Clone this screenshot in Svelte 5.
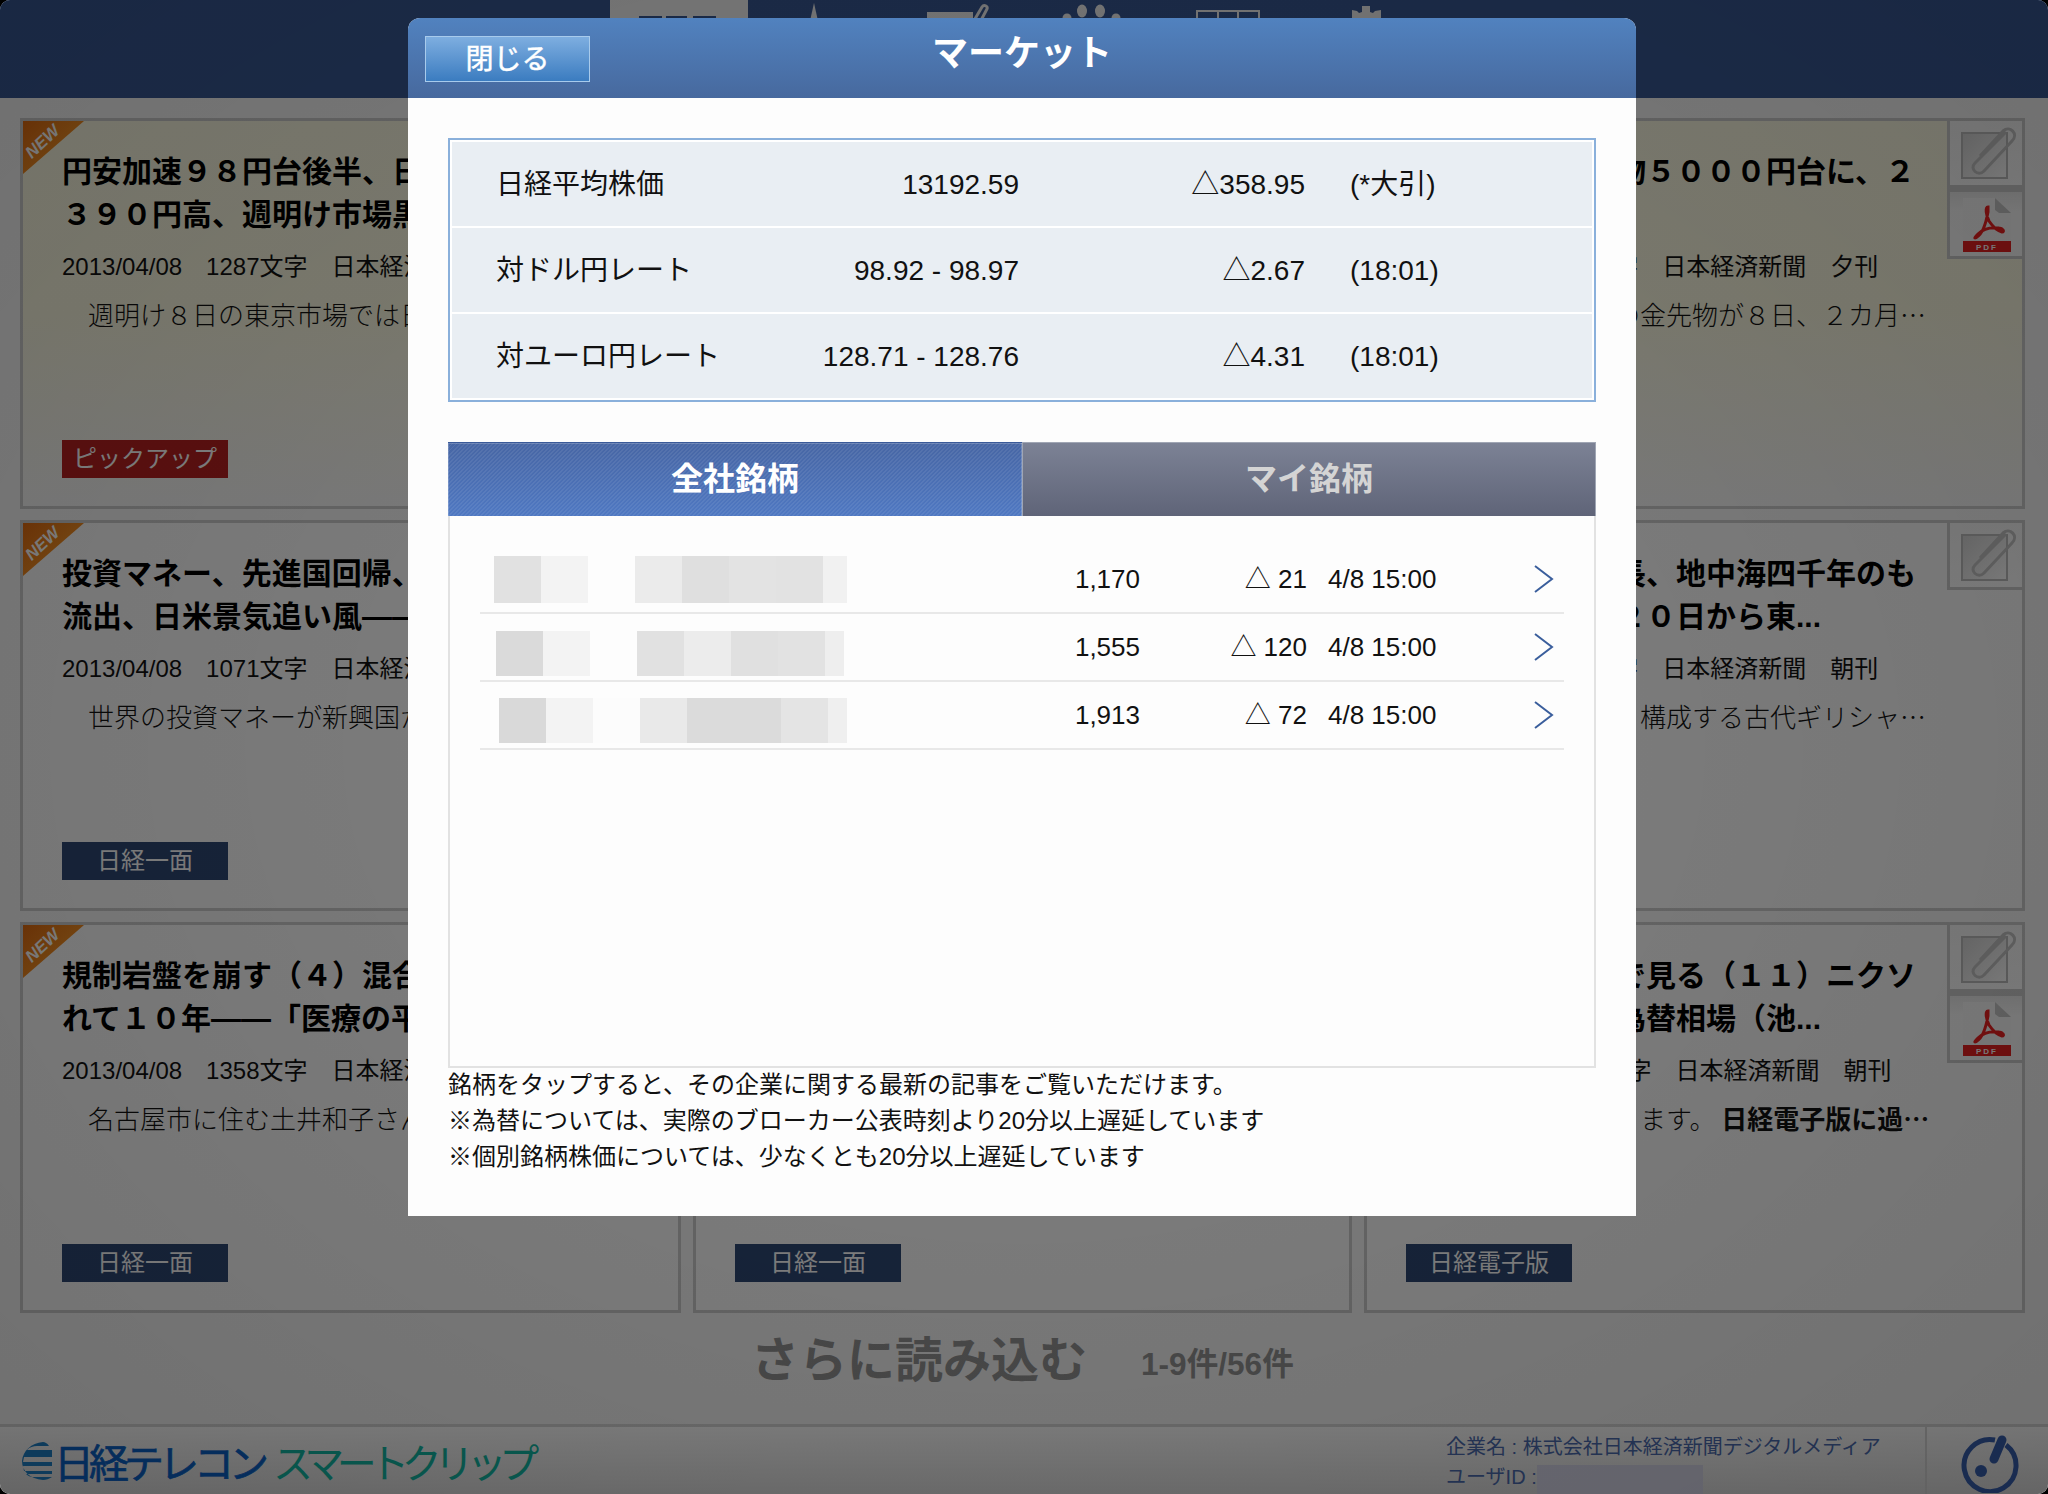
<script>
  const cards = [
    { warm: true, news: true, title: ['円安加速９８円台後半、日', '３９０円高、週明け市場黒'], meta: '2013/04/08　1287文字　日本経済', body: '　週明け８日の東京市場では日', tag: 'ピックアップ', red: true },
    { warm: true, title: ['　', '　'], meta: '　', body: '　' },
    { warm: true, clip: true, pdf: true, title: ['　　　　　　　物５０００円台に、２', '　'], meta: '2013/04/08　101文字　日本経済新聞　夕刊', body: '　　　　　　　　の金先物が８日、２カ月…' },
    { news: true, title: ['投資マネー、先進国回帰、新', '流出、日米景気追い風——'], meta: '2013/04/08　1071文字　日本経済', body: '　世界の投資マネーが新興国か', tag: '日経一面' },
    { title: ['　', '　'], meta: '　', body: '　' },
    { clip: true, title: ['　　　　　　　長、地中海四千年のも', '　　　　　　　２０日から東...'], meta: '2013/04/08　101文字　日本経済新聞　朝刊', body: '　　　　　　　　　構成する古代ギリシャ…' },
    { news: true, title: ['規制岩盤を崩す（４）混合', 'れて１０年——「医療の平'], meta: '2013/04/08　1358文字　日本経済', body: '　名古屋市に住む土井和子さん', tag: '日経一面' },
    { title: ['　', '　'], meta: '　', body: '　', tag: '日経一面' },
    { clip: true, pdf: true, title: ['　　　　　　　で見る（１１）ニクソ', '　　　　　　　為替相場（池...'], meta: '2013/04/08　1358文字　日本経済新聞　朝刊', body: '　　　　　　　　　ます。', bold: '日経電子版に過…', tag: '日経電子版' }
  ];

  const market = [
    ['日経平均株価', '13192.59', '△358.95', '(*大引)'],
    ['対ドル円レート', '98.92 - 98.97', '△2.67', '(18:01)'],
    ['対ユーロ円レート', '128.71 - 128.76', '△4.31', '(18:01)']
  ];

  // blurred company names: [width, grey]
  const stocks = [
    { left: 14, top: 0, h: 47, price: '1,170', diff: '△ 21', blocks: [[47, '#e1e1e1'], [47, '#f3f3f3'], [47, 'transparent'], [47, '#ebebeb'], [47, '#dfdfdf'], [47, '#e3e3e3'], [47, '#e2e2e2'], [24, '#f1f1f1']] },
    { left: 16, top: 12, h: 45, price: '1,555', diff: '△ 120', blocks: [[47, '#dadada'], [47, '#f3f3f3'], [47, '#fdfdfd'], [47, '#e1e1e1'], [47, '#ececec'], [47, '#e0e0e0'], [47, '#e2e2e2'], [19, '#eeeeee']] },
    { left: 19, top: 10, h: 45, price: '1,913', diff: '△ 72', blocks: [[47, '#d9d9d9'], [47, '#f3f3f3'], [47, '#fcfcfc'], [47, '#e9e9e9'], [94, '#dbdbdb'], [47, '#e4e4e4'], [19, '#efefef']] }
  ];
</script>

<div class="page">
  <header class="top">
    <nav class="nav">
      <div class="item on">
        <svg width="138" height="98"><path d="M29 16h23v40H29zM56 16h21v40H56zM83 16h23v40H83z" fill="#385894" /></svg>
      </div>
      <div class="item">
        <svg width="138" height="98"><path d="M66 3 72 30H60Z" fill="#f2f2f2" /></svg>
      </div>
      <div class="item">
        <svg width="138" height="98"><path d="M41 12h46v30H41z" fill="#f2f2f2" /><path d="M86 24 96 7c2-3 6-1 5 2L92 26" fill="none" stroke="#f2f2f2" stroke-width="3" /></svg>
      </div>
      <div class="item">
        <svg width="138" height="98" fill="#f2f2f2"><ellipse cx="58" cy="11" rx="5" ry="6.5" /><ellipse cx="76" cy="11" rx="5" ry="6.5" /><circle cx="43" cy="18" r="4.5" /><circle cx="92" cy="18" r="4.5" /></svg>
      </div>
      <div class="item">
        <svg width="138" height="98"><path d="M35 30V11h62v19M56 11v19M76 11v19" fill="none" stroke="#f2f2f2" stroke-width="2" /></svg>
      </div>
      <div class="item">
        <svg width="138" height="98"><path d="M52 30V10l5 1 2 2 3-1V6h8v6l3 1 2-2 6-1v20Z" fill="#f2f2f2" /></svg>
      </div>
    </nav>
  </header>

  <main class="content">
    <div class="grid">
      {#each cards as c}
        <article class="card" class:warm={c.warm}>
          {#if c.news}
            <div class="ribbon"><span>NEW</span></div>
          {/if}
          {#if c.clip}
            <div class="side">
              <div class="sbtn">
                <svg width="72" height="64" viewBox="0 0 72 64">
                  <defs><linearGradient id="sq" x1="0" y1="0" x2="1" y2="1"><stop offset="0" stop-color="#d4d4d4" /><stop offset="1" stop-color="#ffffff" /></linearGradient></defs>
                  <rect x="12" y="12" width="45" height="45" fill="url(#sq)" stroke="#bdbdbd" stroke-width="2" />
                  <path d="M56 11 25 42c-6 6 3 14 9 8L62 20c7-7-2-16-9-10L30 35" fill="none" stroke="#c4c4c4" stroke-width="3" />
                </svg>
              </div>
              {#if c.pdf}
                <div class="sbtn pdf">
                  <svg width="72" height="66" viewBox="0 0 72 66">
                    <path d="M13 6h32l16 15v39H13Z" fill="#fafafa" />
                    <path d="M45 6v12l4 3h12Z" fill="#c8c8c8" />
                    <path d="M38 15c-3 0-2 8 1 14 4 6 9 10 13 11 3 0 1-4-3-4-8-1-16 1-21 6-4 4-4 5-1 3 5-3 9-14 11-25 0-3 0-5 0-5Z" fill="none" stroke="#ee2020" stroke-width="3" />
                    <rect x="13" y="49" width="48" height="11" fill="#e82020" />
                    <text x="37" y="58" text-anchor="middle" class="pdft">PDF</text>
                  </svg>
                </div>
              {/if}
            </div>
          {/if}
          <h2>{c.title[0]}<br />{c.title[1]}</h2>
          <p class="meta">{c.meta}</p>
          <p class="body">{c.body}{#if c.bold}&nbsp;<b>{c.bold}</b>{/if}</p>
          {#if c.tag}
            <div class="tag" class:red={c.red}>{c.tag}</div>
          {/if}
        </article>
      {/each}
    </div>
    <div class="more">
      <span class="load">さらに読み込む</span>
      <span class="count">1-9件/56件</span>
    </div>
  </main>

  <footer class="bottom">
    <div class="logo">
      <svg class="globe" width="32" height="40" viewBox="0 0 32 40">
        <path d="M22 1C10 2 2 10 1 20c0 10 8 18 21 19 3 0 6-1 9-3H12c-3 0-5-1-7-3h26v-3H3l-1-5h29v-4H2l1-5h28V9H6c3-3 6-4 10-4h12c-2-3-4-4-6-4Z" fill="#1e82c8" />
      </svg>
      <span class="nikkei">日経テレコン</span>
      <span class="clipname">スマートクリップ</span>
    </div>
    <div class="user">
      <div>企業名 : 株式会社日本経済新聞デジタルメディア</div>
      <div class="uid">ユーザID : <i></i></div>
    </div>
    <div class="help">
      <svg width="60" height="60" viewBox="0 0 60 60">
        <path d="M36 7A26 26 0 1 0 47 12" fill="none" stroke="#3860b0" stroke-width="5" />
        <path d="M43 7 35 26" stroke="#3860b0" stroke-width="9" stroke-linecap="round" />
        <circle cx="22" cy="38" r="6" fill="#3860b0" />
      </svg>
    </div>
  </footer>

  <div class="dim"></div>

  <section class="modal">
    <div class="modal-head">
      <button class="close">閉じる</button>
      <h1>マーケット</h1>
    </div>
    <div class="modal-body">
      <div class="rates">
        {#each market as m}
          <div class="rate">
            <span>{m[0]}</span>
            <span class="r">{m[1]}</span>
            <span class="r">{m[2]}</span>
            <span class="note">{m[3]}</span>
          </div>
        {/each}
      </div>

      <div class="tabs">
        <div class="tab active">全社銘柄</div>
        <div class="tab">マイ銘柄</div>
      </div>
      <div class="panel">
        {#each stocks as s}
          <div class="stock">
            <div class="name" style="margin-left:{s.left}px;margin-top:{s.top}px">
              {#each s.blocks as b}
                <i style="width:{b[0]}px;height:{s.h}px;background:{b[1]}"></i>
              {/each}
            </div>
            <span class="r">{s.price}</span>
            <span class="r">{s.diff}</span>
            <span class="time">4/8 15:00</span>
            <svg width="20" height="28" viewBox="0 0 20 28"><path d="M1 1 18 14 1 27" fill="none" stroke="#3a5e9c" stroke-width="2" /></svg>
          </div>
        {/each}
      </div>

      <div class="notes">
        <div>銘柄をタップすると、その企業に関する最新の記事をご覧いただけます。</div>
        <div>※為替については、実際のブローカー公表時刻より20分以上遅延しています</div>
        <div>※個別銘柄株価については、少なくとも20分以上遅延しています</div>
      </div>
    </div>
  </section>
</div>

<style>
:global(body) {
  margin: 0;
  background: #000;
}

.page {
  position: relative;
  width: 2048px;
  height: 1494px;
  overflow: hidden;
  border-radius: 10px;
  display: flex;
  flex-direction: column;
  background: #f8f8f8;
  font-family: "Liberation Sans", "Noto Sans CJK JP", sans-serif;
  color: #111;
}

.top {
  height: 98px;
  flex: none;
  background: #385894;
  padding-left: 610px;
}
.nav {
  display: flex;
}
.item {
  width: 138px;
  height: 98px;
}
.item.on {
  background: #f6f6f6;
}

.content {
  flex: 1;
  padding: 20px 23px 0 20px;
}
.grid {
  display: grid;
  grid-template-columns: 661px 659px 661px;
  grid-auto-rows: 391px;
  gap: 11px 12px;
}
.card {
  position: relative;
  box-sizing: border-box;
  border: 3px solid #cccccc;
  padding: 29px 39px 28px;
  display: flex;
  flex-direction: column;
  background: #fcfcfc;
}
.card.warm {
  background: linear-gradient(#fdfbe4, #fcfae2 50%, #f8f8f8);
}
.ribbon {
  position: absolute;
  left: 0;
  top: 0;
  width: 61px;
  height: 53px;
  background: linear-gradient(135deg, #e06a10, #f08a20 50%);
  clip-path: polygon(0 0, 100% 0, 0 100%);
}
.ribbon span {
  position: absolute;
  left: 0;
  top: 11px;
  transform: rotate(-43deg);
  font: italic bold 17px "Liberation Sans", sans-serif;
  color: #fff;
}
.side {
  position: absolute;
  right: -3px;
  top: -3px;
  width: 78px;
}
.sbtn {
  box-sizing: border-box;
  height: 70px;
  border: 3px solid #cccccc;
  background: linear-gradient(#f8f8f8, #fefefe);
}
.sbtn svg {
  display: block;
}
.sbtn.pdf {
  height: 71px;
  border-top-width: 4px;
  background: linear-gradient(#ececec, #fcfcfc 30%);
}
.pdft {
  font: bold 8px "Liberation Sans", sans-serif;
  letter-spacing: 2px;
  fill: #fff;
}
h2 {
  margin: 0;
  font-size: 30px;
  line-height: 43px;
  font-weight: 700;
  white-space: nowrap;
  color: #000;
}
.meta {
  margin: 15px 0 0;
  font-size: 24px;
  line-height: 32px;
  white-space: nowrap;
}
.body {
  margin: 15px 0 0;
  font-family: "Noto Sans CJK JP", sans-serif;
  font-size: 26px;
  font-weight: 300;
  line-height: 32px;
  white-space: nowrap;
}
.body b {
  font-weight: 700;
}
.tag {
  margin-top: auto;
  width: 166px;
  height: 38px;
  line-height: 38px;
  text-align: center;
  font-size: 24px;
  color: #fff;
  background: #2e4874;
}
.tag.red {
  background: #b82020;
}

.more {
  display: flex;
  align-items: center;
  height: 86px;
  padding-left: 731px;
  color: #949494;
  font-weight: 700;
}
.load {
  font-size: 48px;
  width: 390px;
}
.count {
  font-size: 31.6px;
  margin-top: 10px;
}

.bottom {
  flex: none;
  height: 70px;
  box-sizing: border-box;
  border-top: 3px solid #d8d8d8;
  background: linear-gradient(#ffffff, #e0e0e0);
  display: flex;
  align-items: center;
  padding-left: 21px;
}
.logo {
  display: flex;
  align-items: center;
  width: 1425px;
  white-space: nowrap;
  font-size: 40px;
}
.globe {
  margin-right: 1px;
}
.nikkei {
  color: #0a62c8;
  letter-spacing: -5px;
  margin-right: 9px;
  -webkit-text-stroke: 0.7px #0a62c8;
}
.clipname {
  color: #12b8a4;
  letter-spacing: -7.5px;
}
.user {
  width: 479px;
  font-size: 20px;
  line-height: 30px;
  color: #4c6cb0;
  padding-top: 2px;
}
.uid {
  position: relative;
}
.uid i {
  position: absolute;
  left: 91px;
  top: 3px;
  width: 166px;
  height: 30px;
  background: #d8d8ea;
}
.help {
  height: 100%;
  border-left: 2px solid #d8d8d8;
  padding-left: 32px;
}
.help svg {
  display: block;
  margin-top: 6px;
}

.dim {
  position: absolute;
  inset: 0;
  background: radial-gradient(ellipse at center, rgba(0, 0, 0, 0.49), rgba(0, 0, 0, 0.55));
}

.modal {
  position: absolute;
  left: 408px;
  top: 18px;
  width: 1228px;
  border-radius: 12px 12px 0 0;
  overflow: hidden;
  background: #fdfdfd;
}
.modal-head {
  position: relative;
  height: 80px;
  background: linear-gradient(#5182bf, #47699e);
  text-align: center;
}
.modal-head h1 {
  margin: 0;
  font-size: 36px;
  line-height: 72px;
  font-weight: 700;
  color: #fff;
}
.close {
  position: absolute;
  left: 17px;
  top: 18px;
  width: 165px;
  height: 46px;
  padding: 0 0 5px;
  border: 1px solid #a8cbec;
  border-radius: 0;
  background: linear-gradient(#7eaee0, #3b7cc0);
  color: #fff;
  font: 28px "Liberation Sans", "Noto Sans CJK JP", sans-serif;
  -webkit-text-stroke: 0.5px #fff;
}
.modal-body {
  padding: 40px 40px 41px;
}
.rates {
  border: 2px solid #8ab0db;
  padding: 2px;
  display: flex;
  flex-direction: column;
  gap: 2px;
  background: #fff;
}
.rate {
  box-sizing: border-box;
  height: 84px;
  padding-top: 2px;
  background: #e9eef3;
  display: grid;
  grid-template-columns: 282px 241px 286px 1fr;
  align-items: center;
  padding-left: 44px;
  font-size: 28px;
  line-height: 34px;
}
.rate .note {
  padding-left: 45px;
}
.r {
  text-align: right;
}

.tabs {
  margin-top: 40px;
  display: flex;
  height: 74px;
}
.tab {
  flex: 1;
  box-sizing: border-box;
  text-align: center;
  font-size: 32px;
  line-height: 72px;
  font-weight: 700;
  color: #d4d4d4;
  border: 1px solid #a0a6b4;
  border-bottom: none;
  background: linear-gradient(#7c8295, #5f6478);
}
.tab.active {
  color: #fff;
  border: none;
  border-top: 1px solid #3a5a98;
  box-shadow: inset 1px 1px 0 rgba(255, 255, 255, 0.2), inset -1px 0 0 rgba(255, 255, 255, 0.2);
  background:
    repeating-linear-gradient(135deg, rgba(255, 255, 255, 0.07) 0 1.41px, transparent 1.41px 2.83px),
    linear-gradient(#4766a4, #4f78c2);
  width: 574px;
  flex: none;
}
.panel {
  box-sizing: border-box;
  height: 552px;
  border: 2px solid #e2e2e2;
  border-top: none;
  padding: 30px 30px 0;
}
.stock {
  height: 68px;
  box-sizing: border-box;
  border-bottom: 2px solid #e8e8e8;
  display: grid;
  grid-template-columns: 480px 180px 167px 1fr auto;
  align-items: center;
  font-size: 26px;
  line-height: 30px;
  padding-right: 10px;
}
.stock svg {
  display: block;
}
.name {
  display: flex;
}
.name i {
  display: block;
}
.time {
  padding-left: 21px;
}
.notes {
  margin-top: -1px;
  font-size: 24px;
  line-height: 36px;
  white-space: nowrap;
}
</style>
